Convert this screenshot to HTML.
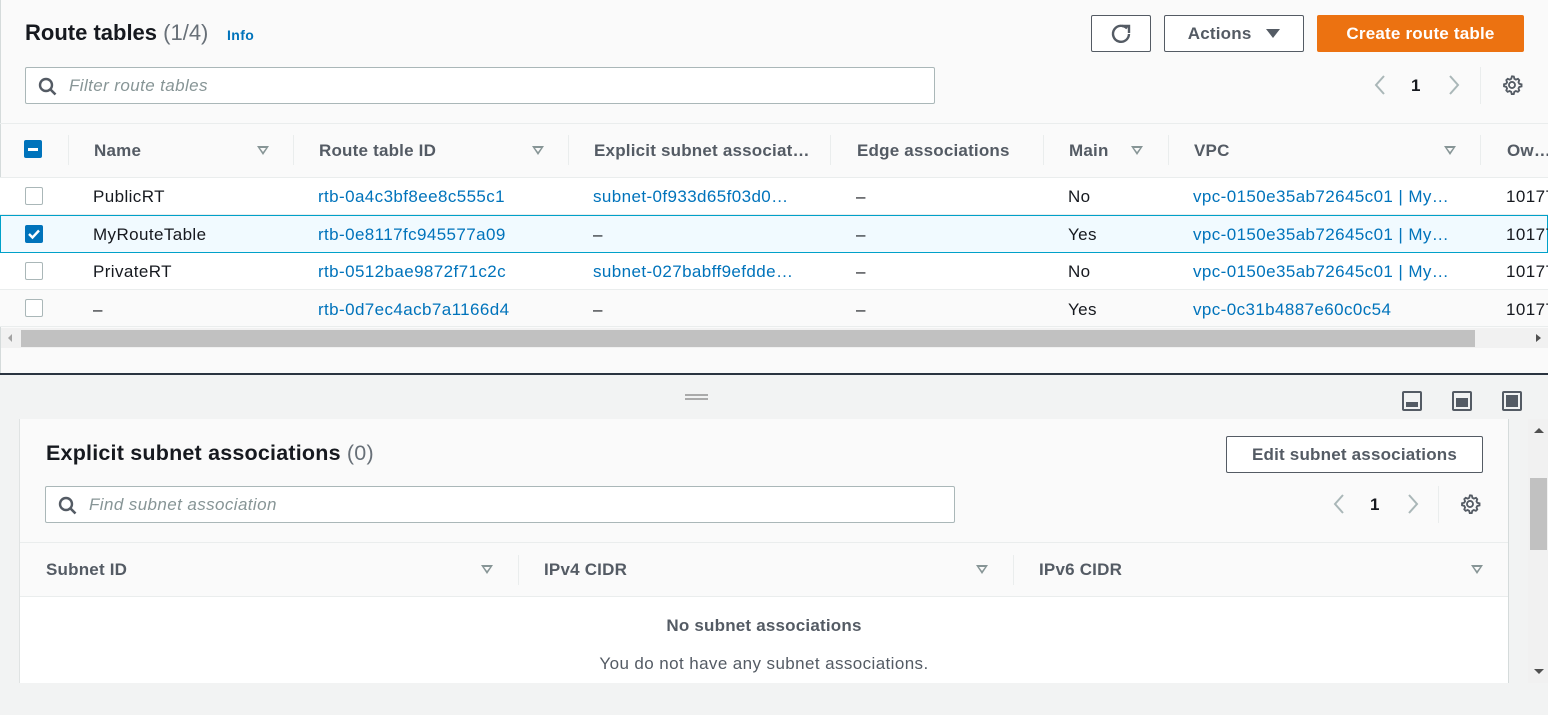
<!DOCTYPE html><html><head><style>
*{margin:0;padding:0;box-sizing:border-box}
body{width:1548px;height:715px;overflow:hidden;background:#fafafa;font-family:"Liberation Sans",sans-serif;color:#16191f;position:relative;font-size:17px;letter-spacing:0.4px}
.a{position:absolute;white-space:nowrap}
.lnk{color:#0073bb}
.h{font-weight:bold;color:#545b64;letter-spacing:0.2px}
.btn{position:absolute;border:1px solid #545b64;border-radius:2px;background:#fff;font-weight:bold;color:#545b64;display:flex;align-items:center;justify-content:center;font-size:17px;letter-spacing:0.2px}
.inp{position:absolute;border:1px solid #aab7b8;border-radius:2px;background:#fff}
.inp span{position:absolute;left:43px;top:8px;font-style:italic;color:#879596;font-size:17px}
.sep{position:absolute;width:1px;background:#eaeded}
.cb{position:absolute;width:18px;height:18px;border:1px solid #aab7b8;border-radius:2px;background:#fff}
.tri{position:absolute;width:0;height:0;border-left:6px solid transparent;border-right:6px solid transparent;border-top:9px solid #879596}
.tri:after{content:"";position:absolute;left:-3px;top:-7px;border-left:3px solid transparent;border-right:3px solid transparent;border-top:4px solid #fafafa}
.row{position:absolute;left:0;width:1548px;background:#fff;border-bottom:1px solid #eaeded}
</style></head><body>
<div class="a" style="left:0;top:0;width:1px;height:374px;background:#d5dbdb"></div>
<div class="a" style="left:25px;top:20px;font-size:22px;font-weight:bold;letter-spacing:0">Route tables <span style="font-weight:normal;color:#687078">(1/4)</span></div>
<div class="a lnk" style="left:227px;top:27px;font-size:14px;font-weight:bold">Info</div>
<div class="btn" style="left:1091px;top:15px;width:60px;height:37px"><svg width="22" height="22" viewBox="0 0 22 22"><path d="M17 5.5A8 8 0 1 0 19 11" fill="none" stroke="#545b64" stroke-width="2.4"/><path d="M12 3h7v7" fill="none" stroke="#545b64" stroke-width="2.4"/></svg></div>
<div class="btn" style="left:1164px;top:15px;width:140px;height:37px">Actions&nbsp;&nbsp;&nbsp;<span style="display:inline-block;border-left:7px solid transparent;border-right:7px solid transparent;border-top:9px solid #545b64"></span></div>
<div class="btn" style="left:1317px;top:15px;width:207px;height:37px;background:#ec7211;border-color:#ec7211;color:#fff">Create route table</div>
<div class="inp" style="left:25px;top:67px;width:910px;height:37px"><svg class="a" style="left:12px;top:9px" width="20" height="20" viewBox="0 0 20 20"><circle cx="8" cy="8" r="6" fill="none" stroke="#545b64" stroke-width="2.4"/><path d="M12.5 12.5l5 5" stroke="#545b64" stroke-width="2.6"/></svg><span>Filter route tables</span></div>
<svg class="a" style="left:1372px;top:74px" width="16" height="22"><path d="M12 2L4 11l8 9" fill="none" stroke="#aab7b8" stroke-width="2"/></svg>
<div class="a" style="left:1411px;top:76px;font-weight:bold">1</div>
<svg class="a" style="left:1446px;top:74px" width="16" height="22"><path d="M4 2l8 9-8 9" fill="none" stroke="#aab7b8" stroke-width="2"/></svg>
<div class="sep" style="left:1480px;top:67px;height:37px"></div>
<svg class="a" style="left:1501px;top:74px" width="22" height="22" viewBox="0 0 24 24"><path d="M12 2.5l2 .3.6 2.4 1.6.9 2.3-.8 1.4 1.5-.8 2.3.9 1.6 2.4.6v2.2l-2.4.6-.9 1.6.8 2.3-1.5 1.4-2.3-.8-1.6.9-.6 2.4h-2.2l-.6-2.4-1.6-.9-2.3.8-1.4-1.5.8-2.3-.9-1.6-2.4-.6v-2.2l2.4-.6.9-1.6-.8-2.3 1.5-1.4 2.3.8 1.6-.9.6-2.4z" fill="none" stroke="#545b64" stroke-width="2"/><circle cx="12" cy="12" r="3.3" fill="none" stroke="#545b64" stroke-width="2"/></svg>
<div class="a" style="left:0;top:123px;width:1548px;height:1px;background:#eaeded"></div>
<div class="a" style="left:0;top:177px;width:1548px;height:1px;background:#eaeded"></div>
<div class="a" style="left:24px;top:140px;width:18px;height:18px;background:#0073bb;border-radius:2px"><div style="position:absolute;left:4px;top:8px;width:10px;height:2.5px;background:#fff"></div></div>
<div class="sep" style="left:68px;top:135px;height:30px"></div>
<div class="sep" style="left:293px;top:135px;height:30px"></div>
<div class="sep" style="left:568px;top:135px;height:30px"></div>
<div class="sep" style="left:830px;top:135px;height:30px"></div>
<div class="sep" style="left:1043px;top:135px;height:30px"></div>
<div class="sep" style="left:1168px;top:135px;height:30px"></div>
<div class="sep" style="left:1480px;top:135px;height:30px"></div>
<div class="a h" style="left:94px;top:141px">Name</div><div class="tri" style="left:257px;top:146px"></div>
<div class="a h" style="left:319px;top:141px">Route table ID</div><div class="tri" style="left:532px;top:146px"></div>
<div class="a h" style="left:594px;top:141px">Explicit subnet associat…</div>
<div class="a h" style="left:857px;top:141px">Edge associations</div>
<div class="a h" style="left:1069px;top:141px">Main</div><div class="tri" style="left:1131px;top:146px"></div>
<div class="a h" style="left:1194px;top:141px">VPC</div><div class="tri" style="left:1444px;top:146px"></div>
<div class="a h" style="left:1507px;top:141px">Ow…</div>

<div class="row" style="top:178px;height:37px"></div>
<div class="row" style="top:215px;height:38px;background:#f1faff;border:1px solid #00a1c9"></div>
<div class="row" style="top:253px;height:37px"></div>
<div class="row" style="top:290px;height:37px;background:#fafafa"></div>

<div class="cb" style="left:25px;top:187px"></div>
<div class="a" style="left:93px;top:187px">PublicRT</div>
<div class="a lnk" style="left:318px;top:187px">rtb-0a4c3bf8ee8c555c1</div>
<div class="a lnk" style="left:593px;top:187px">subnet-0f933d65f03d0…</div>
<div class="a" style="left:856px;top:187px">–</div>
<div class="a" style="left:1068px;top:187px">No</div>
<div class="a lnk" style="left:1193px;top:187px">vpc-0150e35ab72645c01 | My…</div>
<div class="a" style="left:1506px;top:187px">10177</div>

<div class="a" style="left:25px;top:225px;width:18px;height:18px;background:#0073bb;border-radius:2px"><svg width="18" height="18"><path d="M4 9l3.5 3.5L14 5.5" fill="none" stroke="#fff" stroke-width="2.4"/></svg></div>
<div class="a" style="left:93px;top:225px">MyRouteTable</div>
<div class="a lnk" style="left:318px;top:225px">rtb-0e8117fc945577a09</div>
<div class="a" style="left:593px;top:225px">–</div>
<div class="a" style="left:856px;top:225px">–</div>
<div class="a" style="left:1068px;top:225px">Yes</div>
<div class="a lnk" style="left:1193px;top:225px">vpc-0150e35ab72645c01 | My…</div>
<div class="a" style="left:1506px;top:225px">10177</div>

<div class="cb" style="left:25px;top:262px"></div>
<div class="a" style="left:93px;top:262px">PrivateRT</div>
<div class="a lnk" style="left:318px;top:262px">rtb-0512bae9872f71c2c</div>
<div class="a lnk" style="left:593px;top:262px">subnet-027babff9efdde…</div>
<div class="a" style="left:856px;top:262px">–</div>
<div class="a" style="left:1068px;top:262px">No</div>
<div class="a lnk" style="left:1193px;top:262px">vpc-0150e35ab72645c01 | My…</div>
<div class="a" style="left:1506px;top:262px">10177</div>

<div class="cb" style="left:25px;top:299px"></div>
<div class="a" style="left:93px;top:300px">–</div>
<div class="a lnk" style="left:318px;top:300px">rtb-0d7ec4acb7a1166d4</div>
<div class="a" style="left:593px;top:300px">–</div>
<div class="a" style="left:856px;top:300px">–</div>
<div class="a" style="left:1068px;top:300px">Yes</div>
<div class="a lnk" style="left:1193px;top:300px">vpc-0c31b4887e60c0c54</div>
<div class="a" style="left:1506px;top:300px">10177</div>

<div class="a" style="left:1px;top:328px;width:1547px;height:20px;background:#f1f1f1"></div>
<div class="a" style="left:21px;top:330px;width:1454px;height:17px;background:#c1c1c1"></div>
<div class="a" style="left:8px;top:334px;border-top:4px solid transparent;border-bottom:4px solid transparent;border-right:4px solid #a3a3a3"></div>
<div class="a" style="left:1536px;top:334px;border-top:4px solid transparent;border-bottom:4px solid transparent;border-left:5px solid #505050"></div>

<div class="a" style="left:0;top:373px;width:1548px;height:342px;background:#f2f3f3;border-top:2px solid #2a3440"></div>
<div class="a" style="left:685px;top:394px;width:23px;height:2px;background:#aaa"></div>
<div class="a" style="left:685px;top:398px;width:23px;height:2px;background:#aaa"></div>
<div class="a" style="left:1402px;top:391px;width:20px;height:20px;border:2.5px solid #545b64;border-radius:2px"><div style="position:absolute;left:2px;right:2px;bottom:2px;height:5px;background:#545b64"></div></div>
<div class="a" style="left:1452px;top:391px;width:20px;height:20px;border:2.5px solid #545b64;border-radius:2px"><div style="position:absolute;left:2px;right:2px;bottom:2px;height:9px;background:#545b64"></div></div>
<div class="a" style="left:1502px;top:391px;width:20px;height:20px;border:2.5px solid #545b64;border-radius:2px"><div style="position:absolute;left:2px;right:2px;bottom:2px;top:2px;background:#545b64"></div></div>

<div class="a" style="left:19px;top:419px;width:1490px;height:264px;background:#fafafa;border-left:1px solid #e0e3e3;border-right:1px solid #d5dbdb"></div>
<div class="a" style="left:46px;top:441px;font-size:21.5px;font-weight:bold;letter-spacing:0.2px">Explicit subnet associations <span style="font-weight:normal;color:#687078">(0)</span></div>
<div class="btn" style="left:1226px;top:436px;width:257px;height:37px">Edit subnet associations</div>
<div class="inp" style="left:45px;top:486px;width:910px;height:37px"><svg class="a" style="left:12px;top:9px" width="20" height="20" viewBox="0 0 20 20"><circle cx="8" cy="8" r="6" fill="none" stroke="#545b64" stroke-width="2.4"/><path d="M12.5 12.5l5 5" stroke="#545b64" stroke-width="2.6"/></svg><span>Find subnet association</span></div>
<svg class="a" style="left:1331px;top:493px" width="16" height="22"><path d="M12 2L4 11l8 9" fill="none" stroke="#aab7b8" stroke-width="2"/></svg>
<div class="a" style="left:1370px;top:495px;font-weight:bold">1</div>
<svg class="a" style="left:1405px;top:493px" width="16" height="22"><path d="M4 2l8 9-8 9" fill="none" stroke="#aab7b8" stroke-width="2"/></svg>
<div class="sep" style="left:1438px;top:486px;height:37px"></div>
<svg class="a" style="left:1459px;top:493px" width="22" height="22" viewBox="0 0 24 24"><path d="M12 2.5l2 .3.6 2.4 1.6.9 2.3-.8 1.4 1.5-.8 2.3.9 1.6 2.4.6v2.2l-2.4.6-.9 1.6.8 2.3-1.5 1.4-2.3-.8-1.6.9-.6 2.4h-2.2l-.6-2.4-1.6-.9-2.3.8-1.4-1.5.8-2.3-.9-1.6-2.4-.6v-2.2l2.4-.6.9-1.6-.8-2.3 1.5-1.4 2.3.8 1.6-.9.6-2.4z" fill="none" stroke="#545b64" stroke-width="2"/><circle cx="12" cy="12" r="3.3" fill="none" stroke="#545b64" stroke-width="2"/></svg>
<div class="a" style="left:20px;top:542px;width:1488px;height:1px;background:#eaeded"></div>
<div class="a h" style="left:46px;top:560px">Subnet ID</div><div class="tri" style="left:481px;top:565px"></div>
<div class="sep" style="left:518px;top:555px;height:30px"></div>
<div class="a h" style="left:544px;top:560px">IPv4 CIDR</div><div class="tri" style="left:976px;top:565px"></div>
<div class="sep" style="left:1013px;top:555px;height:30px"></div>
<div class="a h" style="left:1039px;top:560px">IPv6 CIDR</div><div class="tri" style="left:1471px;top:565px"></div>
<div class="a" style="left:20px;top:596px;width:1488px;height:87px;background:#fff;border-top:1px solid #eaeded"></div>
<div class="a h" style="left:20px;width:1488px;text-align:center;top:616px">No subnet associations</div>
<div class="a" style="left:20px;width:1488px;text-align:center;top:654px;color:#545b64">You do not have any subnet associations.</div>

<div class="a" style="left:1528px;top:419px;width:20px;height:264px;background:#f1f1f1"></div>
<div class="a" style="left:1530px;top:478px;width:17px;height:72px;background:#c1c1c1"></div>
<div class="a" style="left:1534px;top:428px;border-left:5px solid transparent;border-right:5px solid transparent;border-bottom:5px solid #505050"></div>
<div class="a" style="left:1534px;top:669px;border-left:5px solid transparent;border-right:5px solid transparent;border-top:5px solid #505050"></div>
</body></html>
